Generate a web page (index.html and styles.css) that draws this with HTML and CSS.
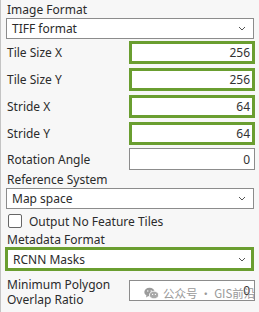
FILE: index.html
```html
<!DOCTYPE html>
<html>
<head>
<meta charset="utf-8">
<link rel="stylesheet" href="styles.css">
</head>
<body>
<div class="panel">
  <div class="label">Image Format</div>
  <div class="select">
    <span>TIFF format</span>
    <svg class="chev" width="8" height="5" viewBox="0 0 8 5"><path d="M1 1 L4 4 L7 1" fill="none" stroke="#555" stroke-width="1"/></svg>
  </div>

  <div class="rows">
    <div class="row"><span class="rlabel">Tile Size X</span><div class="input hl">256</div></div>
    <div class="row"><span class="rlabel">Tile Size Y</span><div class="input hl">256</div></div>
    <div class="row"><span class="rlabel">Stride X</span><div class="input hl">64</div></div>
    <div class="row"><span class="rlabel">Stride Y</span><div class="input hl">64</div></div>
    <div class="row plain"><span class="rlabel">Rotation Angle</span><div class="input">0</div></div>
  </div>

  <div class="label">Reference System</div>
  <div class="select">
    <span>Map space</span>
    <svg class="chev" width="8" height="5" viewBox="0 0 8 5"><path d="M1 1 L4 4 L7 1" fill="none" stroke="#555" stroke-width="1"/></svg>
  </div>

  <div class="check"><span class="box"></span><span>Output No Feature Tiles</span></div>

  <div class="label short">Metadata Format</div>
  <div class="select hlsel">
    <span>RCNN Masks</span>
    <svg class="chev" width="8" height="5" viewBox="0 0 8 5"><path d="M1 1 L4 4 L7 1" fill="none" stroke="#555" stroke-width="1"/></svg>
  </div>

  <div class="row last"><span class="rlabel">Minimum Polygon<br>Overlap Ratio</span><div class="input">0</div></div>

  <div class="watermark">
    <svg width="15" height="13" viewBox="0 0 15 13"><ellipse cx="5.5" cy="5" rx="5.2" ry="4.3" fill="#8a8a8a"/><path d="M2.5 8 L2 10.5 L4.5 9 Z" fill="#8a8a8a"/><ellipse cx="10" cy="8" rx="4.6" ry="3.8" fill="#9a9a9a" stroke="#fff" stroke-width="0.8"/><circle cx="3.8" cy="4" r="0.7" fill="#fff"/><circle cx="7.2" cy="4" r="0.7" fill="#fff"/><circle cx="8.6" cy="7.4" r="0.6" fill="#fff"/><circle cx="11.4" cy="7.4" r="0.6" fill="#fff"/></svg>
    <span>公众号 · GIS前沿</span>
  </div>
</div>
</body>
</html>
```
FILE: styles.css
```css
html, body {
  margin: 0;
  padding: 0;
  background: #f7f7f7;
}
body {
  width: 259px;
  height: 312px;
  overflow: hidden;
  font-family: "Noto Sans", "Open Sans", "Noto Sans CJK SC", sans-serif;
  font-size: 12px;
  color: #2b2b2b;
}
.panel {
  position: relative;
  height: 312px;
  box-sizing: border-box;
  border-left: 1px solid #c4c4c4;
  padding: 0 5px 0 4px;
}
.label {
  height: 17px;
  line-height: 17px;
  padding-left: 2px;
  padding-top: 1px;
}
.label.short {
  height: 16px;
  padding-top: 0;
}
.select {
  height: 21px;
  box-sizing: border-box;
  border: 1px solid #8c8c8c;
  background: #fff;
  display: flex;
  align-items: center;
  justify-content: space-between;
  padding: 0 7px 0 5px;
  margin-left: 1px;
}
.chev { display: block; }
.rows {
  display: grid;
  grid-template-rows: 22px 22px 22px 22px 21px;
  row-gap: 5px;
  margin-top: 2px;
}
.row {
  display: grid;
  grid-template-columns: 124px 126px;
  align-items: center;
}
.row.plain { margin-top: -1px; }
.rlabel { padding-left: 2px; }
.input {
  height: 100%;
  box-sizing: border-box;
  background: #fff;
  border: 1px solid #8c8c8c;
  padding-right: 4px;
  display: flex;
  align-items: center;
  justify-content: flex-end;
  color: #333;
}
.input.hl {
  border: 3px solid #6a9e30;
  padding-right: 2px;
}
.check {
  display: flex;
  align-items: center;
  gap: 7px;
  height: 20px;
  padding-left: 3px;
  margin-top: 2px;
}
.box {
  width: 12px;
  height: 12px;
  border: 1px solid #666;
  border-radius: 2px;
  background: #fff;
}
.hlsel {
  height: 24px;
  border: 3px solid #6a9e30;
  margin-left: 0;
  padding: 0 5px 0 5px;
}
.row.last {
  margin-top: 6px;
  align-items: start;
  line-height: 15px;
}
.row.last .input {
  height: 21px;
  margin-top: 3px;
}
.watermark {
  position: absolute;
  left: 143px;
  top: 285px;
  display: flex;
  align-items: center;
  gap: 4px;
  color: #888;
  opacity: 0.85;
  font-family: "Noto Sans CJK SC", sans-serif;
  font-size: 11.5px;
}
```
